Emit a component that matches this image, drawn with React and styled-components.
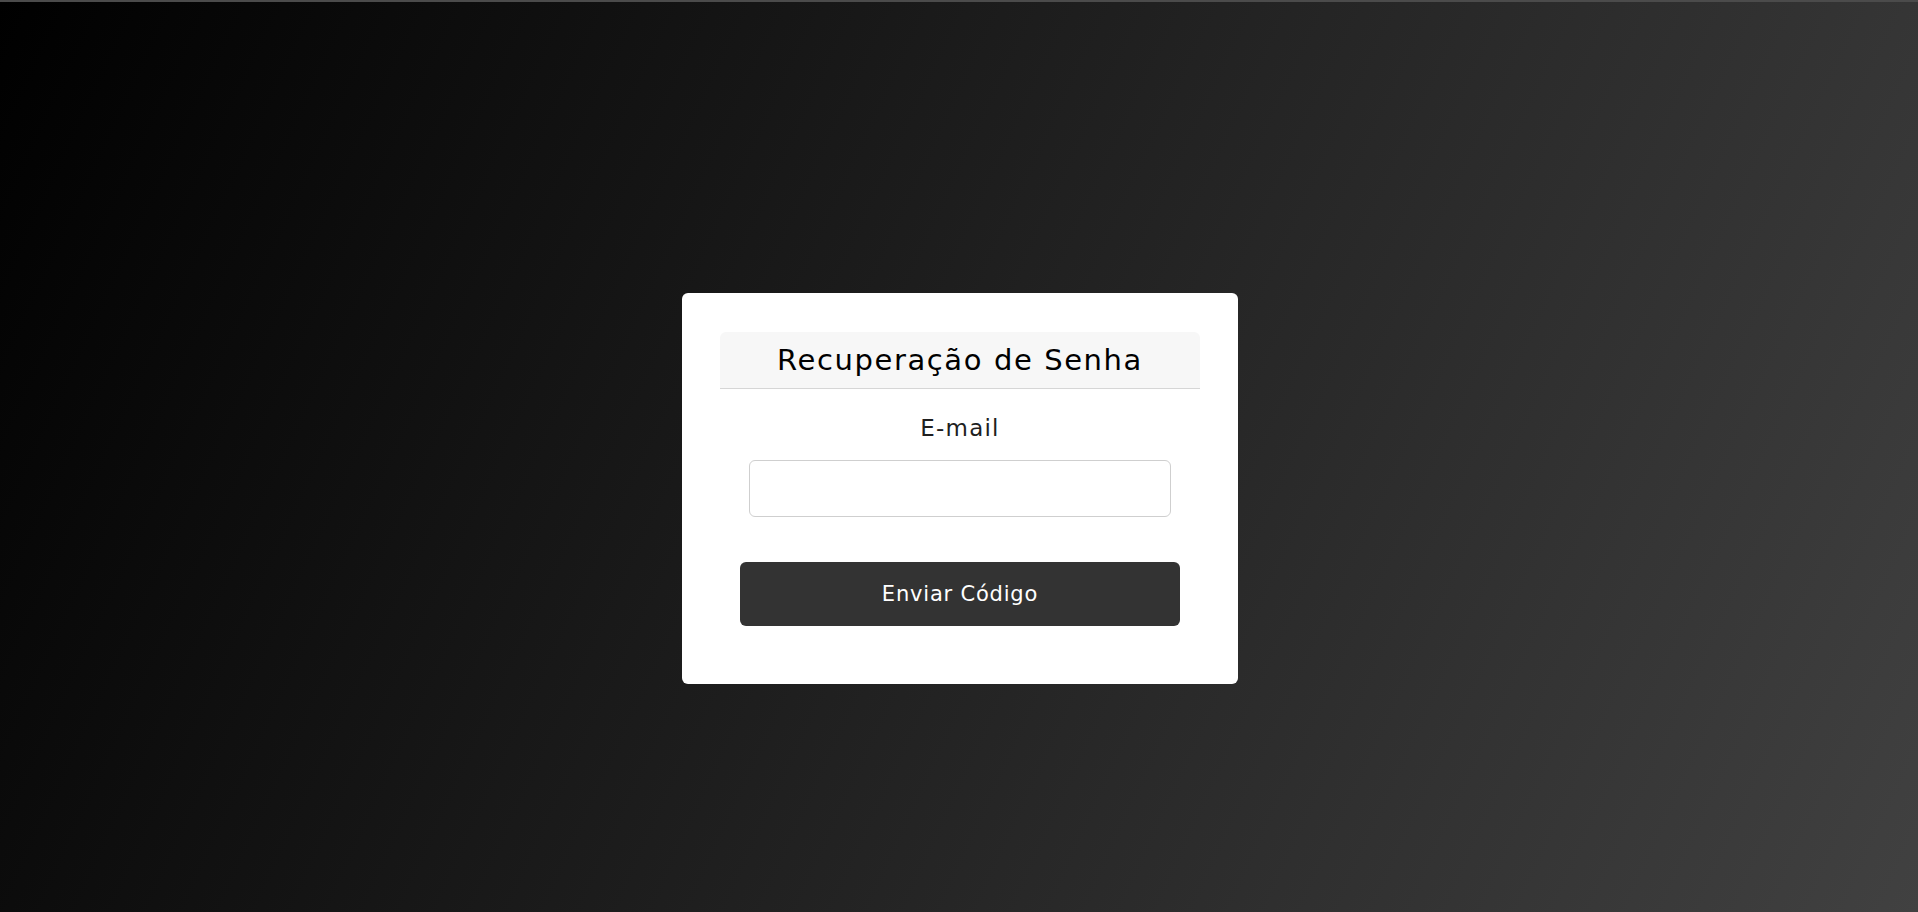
import React from 'react';
import styled, { createGlobalStyle } from 'styled-components';

const GlobalStyle = createGlobalStyle`
  * {
    box-sizing: border-box;
  }

  html,
  body {
    margin: 0;
    padding: 0;
    height: 100%;
  }

  body {
    font-family: 'DejaVu Sans', 'Liberation Sans', sans-serif;
    background: linear-gradient(115deg, #000000 0%, #414141 100%);
    background-attachment: fixed;
  }
`;

const Page = styled.div`
  min-height: 100vh;
  display: flex;
  flex-direction: column;
`;

const TopBar = styled.div`
  height: 2px;
  background-color: #4b4b4b;
`;

const Main = styled.main`
  flex: 1;
  display: flex;
  justify-content: center;
  align-items: flex-start;
  padding: 291px 0 0 2px;
`;

const Card = styled.form`
  width: 556px;
  background-color: #ffffff;
  border-radius: 6px;
  padding: 39px 38px 58px;
  display: flex;
  flex-direction: column;
  align-items: center;
`;

const Header = styled.div`
  width: 100%;
  height: 57px;
  display: flex;
  align-items: center;
  justify-content: center;
  background-color: #f7f7f7;
  border-bottom: 1px solid #d6d6d6;
  border-radius: 6px 6px 0 0;
`;

const Title = styled.h2`
  margin: 0;
  font-size: 29px;
  font-weight: 400;
  letter-spacing: 1.6px;
  color: #000000;
`;

const Label = styled.label`
  margin-top: 24px;
  font-size: 23px;
  line-height: 30px;
  letter-spacing: 1.2px;
  color: #1f1f1f;
`;

const Input = styled.input`
  margin-top: 17px;
  width: 422px;
  height: 57px;
  border: 1px solid #cfcfcf;
  border-radius: 6px;
  padding: 0 14px;
  font-family: inherit;
  font-size: 18px;
  outline: none;
`;

const SubmitButton = styled.button`
  margin-top: 45px;
  width: 440px;
  height: 64px;
  border: none;
  border-radius: 6px;
  background-color: #333333;
  color: #ffffff;
  font-family: inherit;
  font-size: 21px;
  letter-spacing: 0.8px;
  cursor: pointer;

  &:hover {
    background-color: #3d3d3d;
  }
`;

const App = () => {
  return (
    <Page>
      <GlobalStyle />
      <TopBar />
      <Main>
        <Card onSubmit={e => e.preventDefault()}>
          <Header>
            <Title>Recuperação de Senha</Title>
          </Header>
          <Label htmlFor="email">E-mail</Label>
          <Input id="email" type="email" />
          <SubmitButton type="submit">Enviar Código</SubmitButton>
        </Card>
      </Main>
    </Page>
  );
};

export default App;
